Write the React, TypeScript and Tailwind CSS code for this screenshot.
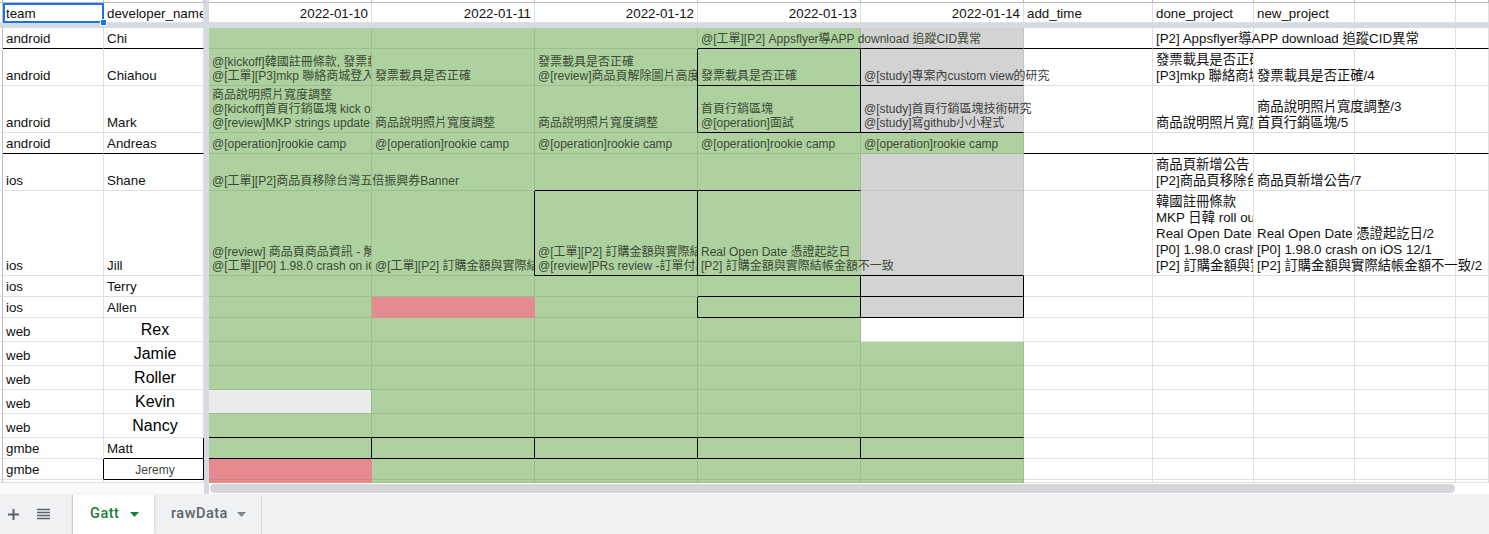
import { ReactNode } from 'react'

const GRID =
  'grid grid-cols-[3px_101px_100px_5px_163px_163px_163px_163px_163px_129px_101px_101px_101px_33px]'

const FILL = {
  none: 'bg-white border-[#e0e0e0]',
  green: 'bg-[#aed19f] border-[#9cbd8e]',
  gray: 'bg-[#d3d3d3] border-[#c4c4c4]',
  pink: 'bg-[#e58a8f] border-[#e58a8f]',
  light: 'bg-[#ebebeb] border-[#9cbd8e]',
}

type Fill = keyof typeof FILL

interface CellSpec {
  text?: string[]
  fill?: Fill
  edge?: string // black border classes
  spill?: boolean // text may run over the next (empty) cell
}

const B = 'border-b-black'
const R = 'border-r-black'
const BR = 'border-b-black border-r-black'

function Cell({
  text,
  fill = 'none',
  edge = '',
  spill = false,
  className = 'pb-[1px] text-[13.33px] leading-[16px] text-[#111]',
  children,
}: CellSpec & { className?: string; children?: ReactNode }) {
  return (
    <div
      className={`flex min-w-0 flex-col justify-end whitespace-nowrap border-r border-b pl-[3px] ${FILL[fill]} ${edge} ${
        spill ? 'relative z-10' : 'overflow-hidden'
      } ${className}`}
    >
      {text?.map((line) => (
        <div key={line}>{line}</div>
      ))}
      {children}
    </div>
  )
}

const G = (text?: string[], edge = '', spill = false): CellSpec => ({ text, fill: 'green', edge, spill })
const Y = (text?: string[], edge = '', spill = false): CellSpec => ({ text, fill: 'gray', edge, spill })
const E = (text?: string[], edge = '', spill = false): CellSpec => ({ text, edge, spill })

const CAMP = ['@[operation]rookie camp']

interface Row {
  h: string
  team: string
  teamEdge?: string
  dev: string
  devEdge?: string
  devStyle?: string
  days: CellSpec[]
  rest?: CellSpec[]
}

const BIG = 'pb-[1px] text-center text-[16px] leading-[20px] text-black'

const rows: Row[] = [
  {
    h: 'h-[21px]',
    team: 'android',
    teamEdge: B,
    dev: 'Chi',
    devEdge: B,
    days: [
      G(),
      G(),
      G(),
      G(['@[工單][P2] Appsflyer導APP download 追蹤CID異常'], B, true),
      Y(undefined, B),
    ],
    rest: [
      E(undefined, B),
      E(['[P2] Appsflyer導APP download 追蹤CID異常'], B, true),
      E(undefined, B),
      E(undefined, B),
      E(undefined, B),
    ],
  },
  {
    h: 'h-[37px]',
    team: 'android',
    dev: 'Chiahou',
    days: [
      G(['@[kickoff]韓國註冊條款, 發票載具是否正確', '@[工單][P3]mkp 聯絡商城登入問題']),
      G(['發票載具是否正確']),
      G(['發票載具是否正確', '@[review]商品頁解除圖片高度限制'], R),
      G(['發票載具是否正確'], BR),
      Y(['@[study]專案內custom view的研究'], B, true),
    ],
    rest: [
      E(),
      E(['發票載具是否正確', '[P3]mkp 聯絡商城登入問題']),
      E(['發票載具是否正確/4'], '', true),
      E(),
      E(),
    ],
  },
  {
    h: 'h-[47px]',
    team: 'android',
    dev: 'Mark',
    days: [
      G(['商品說明照片寬度調整', '@[kickoff]首頁行銷區塊 kick off', '@[review]MKP strings update 2']),
      G(['商品說明照片寬度調整']),
      G(['商品說明照片寬度調整'], R),
      G(['首頁行銷區塊', '@[operation]面試'], BR),
      Y(['@[study]首頁行銷區塊技術研究', '@[study]寫github小小程式'], B, true),
    ],
    rest: [E(), E(['商品說明照片寬度調整']), E(['商品說明照片寬度調整/3', '首頁行銷區塊/5'], '', true), E(), E()],
  },
  {
    h: 'h-[21px]',
    team: 'android',
    teamEdge: B,
    dev: 'Andreas',
    devEdge: B,
    days: [G(CAMP), G(CAMP), G(CAMP), G(CAMP), G(CAMP)],
    rest: [E(undefined, B), E(undefined, B), E(undefined, B), E(undefined, B), E(undefined, B)],
  },
  {
    h: 'h-[37px]',
    team: 'ios',
    dev: 'Shane',
    days: [
      G(['@[工單][P2]商品頁移除台灣五倍振興券Banner'], '', true),
      G(),
      G(undefined, B),
      G(undefined, B),
      Y(),
    ],
    rest: [E(), E(['商品頁新增公告', '[P2]商品頁移除台灣五倍振興券']), E(['商品頁新增公告/7'], '', true), E(), E()],
  },
  {
    h: 'h-[85px]',
    team: 'ios',
    dev: 'Jill',
    days: [
      G(['@[review] 商品頁商品資訊 - 解除限制', '@[工單][P0] 1.98.0 crash on iOS 12']),
      G(['@[工單][P2] 訂購金額與實際結帳金額不一致'], R),
      G(['@[工單][P2] 訂購金額與實際結帳金額', '@[review]PRs review -訂單付款流程'], BR),
      G(['Real Open Date 憑證起訖日', '[P2] 訂購金額與實際結帳金額不一致'], B, true),
      Y(undefined, B),
    ],
    rest: [
      E(),
      E([
        '韓國註冊條款',
        'MKP 日韓 roll out',
        'Real Open Date 憑證起訖日',
        '[P0] 1.98.0 crash on iOS 12',
        '[P2] 訂購金額與實際結帳金額',
      ]),
      E(['Real Open Date 憑證起訖日/2', '[P0] 1.98.0 crash on iOS 12/1', '[P2] 訂購金額與實際結帳金額不一致/2'], '', true),
      E(),
      E(),
    ],
  },
  {
    h: 'h-[21px]',
    team: 'ios',
    dev: 'Terry',
    days: [G(), G(), G(), G(undefined, BR), Y(undefined, BR)],
  },
  {
    h: 'h-[21px]',
    team: 'ios',
    dev: 'Allen',
    days: [G(), { fill: 'pink' }, G(undefined, R), G(undefined, BR), Y(undefined, BR)],
  },
  { h: 'h-[24px]', team: 'web', dev: 'Rex', devStyle: BIG, days: [G(), G(), G(), G(), E()] },
  { h: 'h-[24px]', team: 'web', dev: 'Jamie', devStyle: BIG, days: [G(), G(), G(), G(), G()] },
  { h: 'h-[24px]', team: 'web', dev: 'Roller', devStyle: BIG, days: [G(), G(), G(), G(), G()] },
  { h: 'h-[24px]', team: 'web', dev: 'Kevin', devStyle: BIG, days: [{ fill: 'light' }, G(), G(), G(), G()] },
  {
    h: 'h-[24px]',
    team: 'web',
    dev: 'Nancy',
    devStyle: BIG,
    days: [G(undefined, B), G(undefined, B), G(undefined, B), G(undefined, B), G(undefined, B)],
  },
  {
    h: 'h-[21px]',
    team: 'gmbe',
    dev: 'Matt',
    devEdge: BR,
    days: [G(undefined, BR), G(undefined, BR), G(undefined, BR), G(undefined, BR), G(undefined, B)],
  },
  {
    h: 'h-[21px]',
    team: 'gmbe',
    teamEdge: R,
    dev: 'Jeremy',
    devEdge: BR,
    devStyle: 'pb-[1px] text-center text-[12px] leading-[16px] text-[#444]',
    days: [{ fill: 'pink', edge: 'border-b-[#d2858a]' }, G(), G(), G(), G()],
  },
  { h: 'h-[2px]', team: '', dev: '', days: [{ fill: 'pink' }, G(), G(), G(), G()] },
]

const DAY = 'pb-[2px] text-[12px] leading-[14px] text-[#3b4a36]'
const DAY_GRAY = 'pb-[2px] text-[12px] leading-[14px] text-[#404040]'
const NARROW = 'border-r border-b border-[#e0e0e0]'

function Strip() {
  return <div className="border-r border-b border-r-[#bdbdbd] border-b-[#e0e0e0] bg-white" />
}

function Freeze() {
  return <div className="bg-[#d5dae3]" />
}

function HeaderRow() {
  const dates = ['2022-01-10', '2022-01-11', '2022-01-12', '2022-01-13', '2022-01-14']
  const names = ['add_time', 'done_project', 'new_project', '', '']
  return (
    <>
      <div className={`${GRID} h-[3px]`}>
        <div className="border-r border-b border-[#bdbdbd]" />
        {Array.from({ length: 2 }).map((_, i) => (
          <div key={i} className="border-r border-b border-[#bdbdbd]" />
        ))}
        <Freeze />
        {Array.from({ length: 10 }).map((_, i) => (
          <div key={i} className="border-r border-b border-[#bdbdbd]" />
        ))}
      </div>
      <div className={`${GRID} h-[20px]`}>
        <Strip />
        <div className="relative z-20 h-[20px] bg-white">
          <div className="h-[20px] border-2 border-[#1a73e8] pl-[1px] text-[13.33px] leading-[18px] text-[#111]">
            team
          </div>
          {/* fill handle */}
          <span className="absolute right-[-3px] bottom-[-3px] h-[7px] w-[7px] border border-white bg-[#1a73e8]" />
        </div>
        <Cell text={['developer_name']} className="text-[13.33px] leading-[16px] text-[#111]" />
        <Freeze />
        {dates.map((d) => (
          <div
            key={d}
            className={`flex items-end justify-end bg-white pr-[3px] text-[13.33px] leading-[16px] text-[#111] ${NARROW}`}
          >
            {d}
          </div>
        ))}
        {names.map((n, i) => (
          <Cell key={i} text={n ? [n] : undefined} className="text-[13.33px] leading-[16px] text-[#111]" />
        ))}
      </div>
      <div className="h-[5px] bg-[#d5dae3]" />
    </>
  )
}

function SheetRow({ row }: { row: Row }) {
  const rest = row.rest ?? [E(), E(), E(), E(), E()]
  return (
    <div className={`${GRID} ${row.h}`}>
      <Strip />
      <Cell text={row.team ? [row.team] : undefined} edge={row.teamEdge} />
      <Cell text={row.dev ? [row.dev] : undefined} edge={row.devEdge} className={row.devStyle} />
      <Freeze />
      {row.days.map((c, i) => (
        <Cell key={i} {...c} className={c.fill === 'gray' ? DAY_GRAY : DAY} />
      ))}
      {rest.map((c, i) => (
        <Cell key={i} {...c} />
      ))}
    </div>
  )
}

function ScrollRow() {
  return (
    <div className="flex h-[12px] border-t border-[#c4c4c4] bg-white">
      <div className="w-[204px] bg-[#fafafa]" />
      <div className="w-[5px] bg-[#d5dae3]" />
      <div className="w-[1246px] pt-[1px] pl-[1px]">
        <div className="h-[9px] rounded-[5px] bg-[#d5d6da]" />
      </div>
    </div>
  )
}

function Caret({ className }: { className: string }) {
  return (
    <svg width="9" height="5" viewBox="0 0 9 5" className={className}>
      <path d="M0 0h9L4.5 5z" fill="currentColor" />
    </svg>
  )
}

function TabBar() {
  return (
    <div className="flex h-[40px] bg-[#f0f1f3] font-['Roboto',sans-serif]">
      <div className="flex w-[73px] items-center border-r border-[#dcdde0] pl-[8px]">
        <svg width="11" height="11" viewBox="0 0 11 11" className="text-[#5f6368]">
          <path d="M5.5 0v11M0 5.5h11" stroke="currentColor" strokeWidth="2" />
        </svg>
        <svg width="13" height="12" viewBox="0 0 13 12" className="ml-[18px] text-[#5f6368]">
          <path d="M0 1.5h13M0 4.5h13M0 7.5h13M0 10.5h13" stroke="currentColor" strokeWidth="1.7" />
        </svg>
      </div>
      <div className="flex w-[81px] items-center bg-white pl-[17px] text-[14.5px] font-medium tracking-[0.5px] text-[#188038] shadow-[0_1px_3px_rgba(60,64,67,0.25)]">
        Gatt
        <Caret className="ml-[11px] text-[#188038]" />
      </div>
      <div className="flex w-[108px] items-center border-r border-[#dcdde0] pl-[17px] text-[14.5px] font-medium tracking-[0.5px] text-[#5f6368]">
        rawData
        <Caret className="ml-[9px] text-[#80868b]" />
      </div>
    </div>
  )
}

export default function App() {
  return (
    <div className="h-[534px] w-[1489px] overflow-hidden bg-white font-['Liberation_Sans','Noto_Sans_CJK_TC',sans-serif]">
      <HeaderRow />
      {rows.map((row, i) => (
        <SheetRow key={i} row={row} />
      ))}
      <ScrollRow />
      <TabBar />
    </div>
  )
}
